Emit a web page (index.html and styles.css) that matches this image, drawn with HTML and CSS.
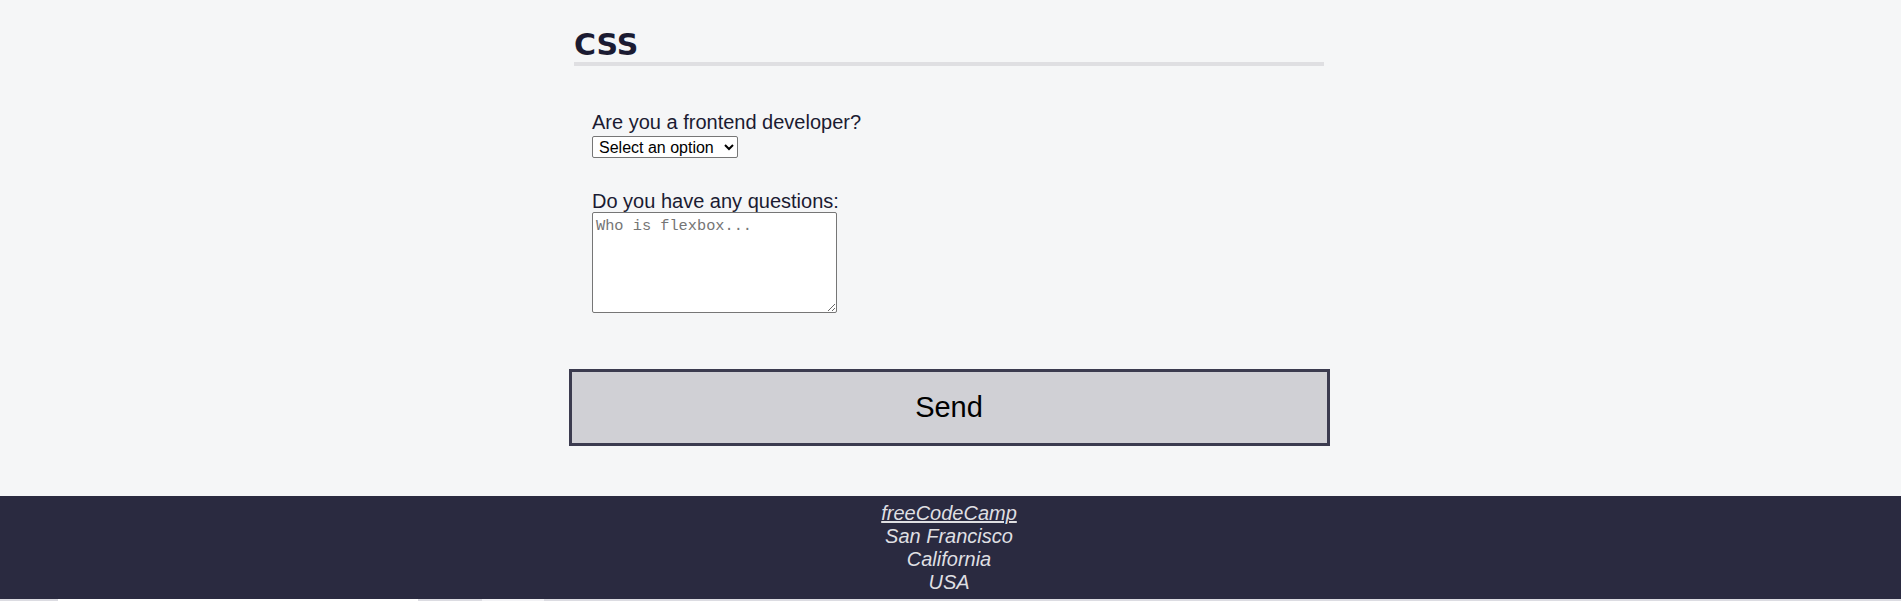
FILE: index.html
```html
<!DOCTYPE html>
<html lang="en">
<head>
<meta charset="utf-8">
<title>Accessibility Quiz</title>
<link rel="stylesheet" href="styles.css">
</head>
<body>
<main class="page">
  <section class="quiz-section">
    <h2 class="section-title">CSS</h2>
    <div class="form-row">
      <div class="question-block">
        <label class="q-label" for="frontend">Are you a frontend developer?</label>
        <select class="q-select" id="frontend" name="frontend">
          <option value="">Select an option</option>
          <option value="yes">Yes</option>
          <option value="no">No</option>
        </select>
      </div>
      <div class="question-block">
        <label class="q-label" for="questions">Do you have any questions:</label>
        <textarea class="q-textarea" id="questions" name="questions" placeholder="Who is flexbox..."></textarea>
      </div>
    </div>
  </section>
  <button class="send-btn" type="submit">Send</button>
</main>
<footer class="site-footer">
  <address class="footer-address">
    <a class="footer-link" href="#">freeCodeCamp</a><br>
    San Francisco<br>
    California<br>
    USA
  </address>
</footer>
<div class="bottom-strip">
  <span class="strip-seg strip-seg-a"></span>
  <span class="strip-seg strip-seg-b"></span>
</div>
</body>
</html>
```

FILE: styles.css
```css
html, body {
  margin: 0;
  padding: 0;
}

body {
  background: #f5f6f7;
  color: #1b1b32;
  font-family: "Liberation Sans", Arial, Helvetica, sans-serif;
}

.page {
  display: flex;
  flex-direction: column;
  align-items: center;
  padding-right: 3px;
}

.quiz-section {
  width: 750px;
}

.section-title {
  margin: 0;
  padding-top: 27px;
  font-family: "DejaVu Sans", Verdana, Tahoma, sans-serif;
  font-weight: bold;
  font-size: 30px;
  line-height: 35px;
  color: #1b1b32;
  border-bottom: 4px solid #dfdfe2;
}

.form-row {
  display: flex;
  flex-direction: column;
  gap: 32px;
  padding: 45px 0 0 18px;
}

.question-block {
  display: flex;
  flex-direction: column;
  align-items: flex-start;
}

.q-label {
  font-size: 20px;
  line-height: 22px;
}

.q-select {
  margin-top: 3px;
  width: 146px;
  height: 22px;
  font-family: "Liberation Sans", Arial, sans-serif;
  font-size: 16px;
  color: #000;
  background: #fff;
  border: 1px solid #767676;
  border-radius: 2px;
  padding: 0 0 0 2px;
}

.q-textarea {
  box-sizing: border-box;
  width: 245px;
  height: 101px;
  font-family: "Liberation Mono", "Courier New", monospace;
  font-size: 15.3px;
  padding: 4px 3px 2px;
  border: 1px solid #767676;
  border-radius: 2px;
  background: #fff;
  resize: both;
}

.q-textarea::placeholder {
  color: #757575;
}

.send-btn {
  box-sizing: border-box;
  margin: 56px 0 50px;
  width: 761px;
  height: 77px;
  font-family: "Liberation Sans", Arial, sans-serif;
  font-size: 29px;
  color: #000;
  background: #d0d0d5;
  border: 3px solid #3b3b4f;
  padding: 0;
}

.site-footer {
  background-color: #2a2a40;
  display: flex;
  justify-content: center;
  padding-right: 3px;
}

.footer-address {
  text-align: center;
  padding: 6px;
  font-size: 20px;
  line-height: 23px;
  color: #dfdfe2;
  font-style: italic;
}

.footer-link {
  color: #dfdfe2;
}

.bottom-strip {
  position: fixed;
  left: 0;
  right: 0;
  bottom: 0;
  height: 2px;
  background: #dcdce2;
}

.strip-seg {
  position: absolute;
  top: 0;
  height: 2px;
}

.strip-seg-a {
  left: 58px;
  width: 360px;
  background: #ffffff;
}

.strip-seg-b {
  left: 482px;
  width: 62px;
  background: #f2f2f5;
}
```
